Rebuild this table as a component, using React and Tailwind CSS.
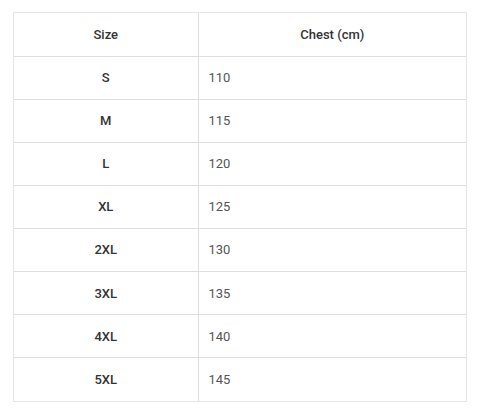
const rows = [
  ["S", "110"],
  ["M", "115"],
  ["L", "120"],
  ["XL", "125"],
  ["2XL", "130"],
  ["3XL", "135"],
  ["4XL", "140"],
  ["5XL", "145"],
];

export default function App() {
  return (
    <div className="w-[480px] h-[413px] bg-white pt-3 pl-[13px] font-['Roboto','Liberation_Sans',sans-serif] text-[13px]">
      <div className="w-[454px] border border-[#e6e6e6]">
        <table className="w-full border-collapse">
          <thead>
            <tr className="h-[43px]">
              <th className="w-[184px] border border-[#dedede] border-t-0 border-l-0 font-medium text-[#333]">Size</th>
              <th className="border border-[#dedede] border-t-0 border-r-0 font-medium text-[#333]">Chest (cm)</th>
            </tr>
          </thead>
          <tbody>
            {rows.map(([size, chest], i) => (
              <tr key={size} className="h-[43.15px]">
                <td className={`border border-[#dedede] border-l-0 text-center font-medium text-[#333] ${i === rows.length - 1 ? "border-b-0" : ""}`}>{size}</td>
                <td className={`border border-[#dedede] border-r-0 pl-[10px] text-[#555] ${i === rows.length - 1 ? "border-b-0" : ""}`}>{chest}</td>
              </tr>
            ))}
          </tbody>
        </table>
      </div>
    </div>
  );
}
